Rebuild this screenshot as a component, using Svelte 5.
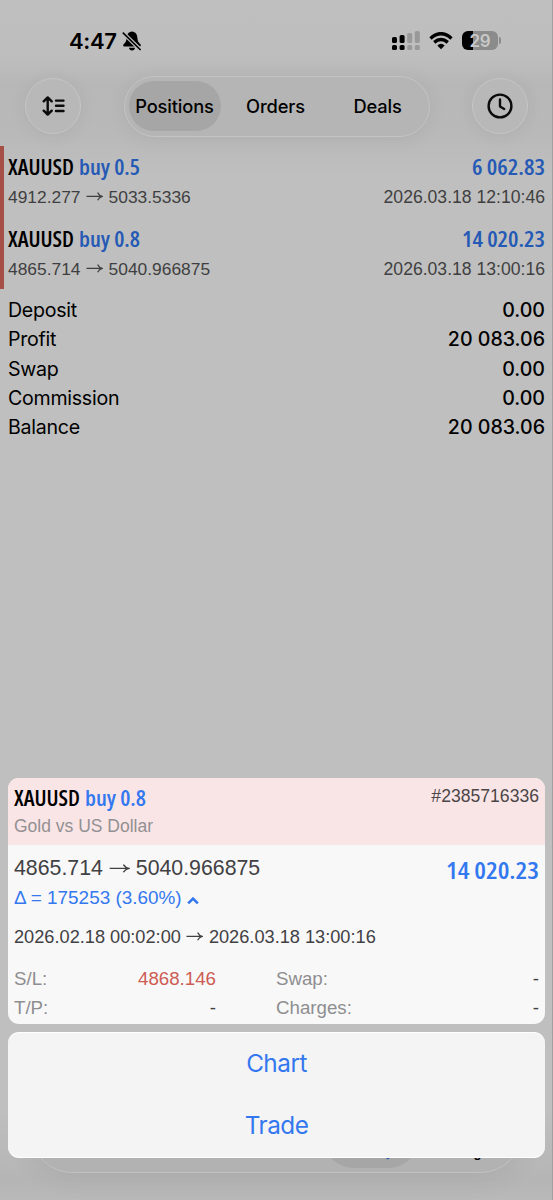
<script>
  const tabs = ["Positions", "Orders", "Deals"];

  const positions = [
    {
      side: "buy 0.5",
      open: "4912.277",
      close: "5033.5336",
      profit: "6 062.83",
      profitWidth: 73,
      time: "2026.03.18 12:10:46",
    },
    {
      side: "buy 0.8",
      open: "4865.714",
      close: "5040.966875",
      profit: "14 020.23",
      profitWidth: 83,
      time: "2026.03.18 13:00:16",
    },
  ];

  const summary = [
    { label: "Deposit", value: "0.00" },
    { label: "Profit", value: "20 083.06" },
    { label: "Swap", value: "0.00" },
    { label: "Commission", value: "0.00" },
    { label: "Balance", value: "20 083.06" },
  ];

  const nav = ["Quotes", "Chart", "Trade", "History", "Settings"];
</script>

<!-- condensed headline text, squeezed to a fixed width -->
{#snippet condensed(text, width, kind)}
  <svg class="condensed {kind}" {width} height="28">
    <text x="0" y="21" textLength={width} lengthAdjust="spacingAndGlyphs">{text}</text>
  </svg>
{/snippet}

{#snippet arrow(width)}
  <svg class="arrow" {width} height="12" viewBox="0 0 17 12" preserveAspectRatio="none">
    <path d="M0.5 5.4H16M11.6 1.6Q13.2 4.6 16.2 5.4Q13.2 6.2 11.6 9.2" />
  </svg>
{/snippet}

<div class="screen">
  <header class="status">
    <div class="status-left">
      <span class="time">4:47</span>
      <svg class="bell" width="20" height="20" viewBox="0 0 20 20">
        <path d="M10 0.6C6.4 0.9 4.7 3.6 4.6 7C4.5 10.3 3.4 11.4 1.6 13.2C0.7 14.3 1.3 15.6 2.6 15.6H17.4C18.7 15.6 19.3 14.3 18.4 13.2C16.6 11.4 15.5 10.3 15.4 7C15.3 3.6 13.6 0.9 10 0.6Z" />
        <path d="M7 16.8H13Q12.6 19.5 10 19.5Q7.4 19.5 7 16.8Z" />
        <path class="gap" d="M0.8 1.6L18.6 19" />
        <path class="slash" d="M0.8 1.6L18.6 19" />
      </svg>
    </div>
    <div class="status-right">
      <svg width="28" height="20" viewBox="0 0 28 20">
        <rect x="0" y="6" width="5" height="6" rx="1.6" />
        <rect x="7.6" y="4" width="5" height="8" rx="1.6" />
        <rect class="dim" x="15.2" y="2" width="5" height="10" rx="1.6" />
        <rect class="dim" x="22.8" y="0" width="5" height="12" rx="1.6" />
        <rect x="0" y="14" width="5" height="5" rx="1.6" />
        <rect x="7.6" y="14" width="5" height="5" rx="1.6" />
        <rect class="dim" x="15.2" y="14" width="5" height="5" rx="1.6" />
        <rect class="dim" x="22.8" y="14" width="5" height="5" rx="1.6" />
      </svg>
      <svg class="wifi" width="24" height="18" viewBox="0 0 24 18">
        <path class="wave" d="M1.5 6.4Q12 -3 22.5 6.4" />
        <path class="wave" d="M5.2 10.4Q12 4.5 18.8 10.4" />
        <path d="M8.3 13.4Q12 10.2 15.7 13.4L12 17.3Z" />
      </svg>
      <div class="battery"><span>29</span></div>
    </div>
  </header>

  <div class="toolbar">
    <button class="round" aria-label="Sort">
      <svg width="24" height="20" viewBox="0 0 24 20">
        <path d="M6.7 1.6V18.4M2.7 5.3L6.7 1.4L10.7 5.3M2.7 14.7L6.7 18.6L10.7 14.7" />
        <path d="M15 4.6H22.5M15 9.8H22.5M15 15H22.5" />
      </svg>
    </button>
    <div class="segments">
      {#each tabs as tab, i}
        <button class="segment" class:active={i === 0}>{tab}</button>
      {/each}
    </div>
    <button class="round" aria-label="Period">
      <svg width="26" height="26" viewBox="0 0 26 26">
        <circle cx="13" cy="13" r="11.4" />
        <path d="M13 6.5V13.5L17.2 16" />
      </svg>
    </button>
  </div>

  <main>
    <section class="positions">
      {#each positions as p}
        <article>
          <div class="line title">
            <div class="symbol">
              {@render condensed("XAUUSD", 66, "black")}
              {@render condensed(p.side, 61, "blue")}
            </div>
            {@render condensed(p.profit, p.profitWidth, "blue")}
          </div>
          <div class="line detail">
            <span>{p.open}{@render arrow(17)}{p.close}</span>
            <span class="closed">{p.time}</span>
          </div>
        </article>
      {/each}
    </section>

    <section class="summary">
      {#each summary as row}
        <div class="line">
          <span>{row.label}</span>
          <span class="value">{row.value}</span>
        </div>
      {/each}
    </section>
  </main>

  <nav>
    {#each nav as item}
      <span class:current={item === "History"}>{item}</span>
    {/each}
  </nav>

  <div class="sheet">
    <div class="card">
      <div class="card-header">
        <div>
          <div class="symbol">
            {@render condensed("XAUUSD", 66, "black")}
            {@render condensed("buy 0.8", 61, "bright")}
          </div>
          <div class="description">Gold vs US Dollar</div>
        </div>
        <span class="ticket">#2385716336</span>
      </div>
      <div class="card-body">
        <div class="line prices">
          <span>4865.714{@render arrow(21)}5040.966875</span>
          {@render condensed("14 020.23", 93, "bright large")}
        </div>
        <div class="delta">
          <span>Δ = 175253 (3.60%)</span>
          <svg width="12" height="9" viewBox="0 0 12 9">
            <path d="M1.2 7.3L6 2.5L10.8 7.3" />
          </svg>
        </div>
        <div class="period">2026.02.18 00:02:00{@render arrow(17)}2026.03.18 13:00:16</div>
        <div class="fields">
          <div class="line"><span>S/L:</span><span class="stop">4868.146</span></div>
          <div class="line"><span>Swap:</span><span class="dash">-</span></div>
          <div class="line"><span>T/P:</span><span class="dash">-</span></div>
          <div class="line"><span>Charges:</span><span class="dash">-</span></div>
        </div>
      </div>
    </div>

    <div class="card actions">
      <button>Chart</button>
      <button>Trade</button>
    </div>
  </div>
</div>

<style>
  :global(body) {
    background: #bfbfbf;
  }

  .screen {
    position: relative;
    box-sizing: border-box;
    width: 553px;
    height: 1200px;
    overflow: hidden;
    display: flex;
    flex-direction: column;
    background:
      linear-gradient(#b8b8b800 1110px, #b5b5b5 1180px, #b9b9b9 1200px),
      linear-gradient(#bfbfbf 0, #bebebe 55px, #b7b7b7 85px, #b9b9b9 135px, #bfbfbf 175px);
    border-right: 1px solid #a0a0a0;
    color: #000;
    font-family: "Liberation Sans", Arial, sans-serif;
  }

  button {
    padding: 0;
    border: 0;
    background: none;
    font: inherit;
    color: inherit;
    letter-spacing: inherit;
  }

  .status {
    display: flex;
    justify-content: space-between;
    height: 76px;
    padding: 0 54px 0 69px;
    box-sizing: border-box;
    font-family: Inter, sans-serif;
  }

  .status-left {
    display: flex;
    align-items: flex-start;
    padding-top: 27px;
  }

  .time {
    width: 53px;
    font-size: 22px;
    line-height: 28px;
    font-weight: 600;
    letter-spacing: -0.35px;
  }

  .bell {
    margin-top: 4px;
  }

  .gap {
    stroke: #bfbfbf;
    stroke-width: 4;
  }

  .slash {
    stroke: #000;
    stroke-width: 1.6;
  }

  .status-right {
    display: flex;
    align-items: flex-start;
    padding-top: 31px;
  }

  .dim {
    fill: #999;
  }

  .wifi {
    margin: 1px 9px 0;
  }

  .wave {
    fill: none;
    stroke: #000;
    stroke-width: 3.4;
  }

  .battery {
    position: relative;
    width: 36px;
    height: 19px;
    border-radius: 6px;
    background: linear-gradient(90deg, #000 11px, #8b8b8b 11px);
    color: #c8c8c8;
    font-size: 17px;
    font-weight: 600;
    line-height: 20px;
    letter-spacing: -0.3px;
    text-align: center;
  }

  .battery::after {
    content: "";
    position: absolute;
    left: 37px;
    top: 6px;
    width: 2px;
    height: 7px;
    border-radius: 0 2px 2px 0;
    background: #8b8b8b;
  }

  .toolbar {
    display: flex;
    align-items: center;
    justify-content: space-between;
    height: 60px;
    padding: 0 24px 0 25px;
    margin-bottom: 10px;
  }

  .round {
    display: flex;
    align-items: center;
    justify-content: center;
    box-sizing: border-box;
    width: 56px;
    height: 56px;
    border: 1.5px solid #c6c6c6;
    border-radius: 50%;
    background: #b8b8b8;
    box-shadow: 0 2px 18px rgba(0, 0, 0, 0.06);
  }

  .round svg {
    fill: none;
    stroke: #0b0b0b;
    stroke-width: 2.4;
    stroke-linecap: round;
    stroke-linejoin: round;
  }

  .segments {
    display: flex;
    align-items: center;
    box-sizing: border-box;
    width: 306px;
    height: 61px;
    padding: 0 4px;
    border: 1.5px solid #c4c4c4;
    border-radius: 31px;
    background: #b5b5b5;
    box-shadow: 0 2px 20px rgba(0, 0, 0, 0.06);
    font-family: Inter, sans-serif;
    font-size: 18.3px;
    font-weight: 450;
    letter-spacing: -0.15px;
  }

  .segment {
    flex-shrink: 0;
    width: 102px;
    height: 50px;
    border-radius: 25px;
  }

  .segment.active {
    width: 92px;
    margin-right: 4px;
    background: #a6a6a6;
  }

  .line {
    display: flex;
    justify-content: space-between;
  }

  .positions {
    border-left: 4px solid #a54f47;
  }

  .positions article {
    box-sizing: border-box;
    height: 71.5px;
    padding: 8px 7px 0 4px;
  }

  .symbol {
    display: flex;
    gap: 5px;
  }

  .condensed {
    display: block;
    overflow: visible;
    font-family: "Open Sans", sans-serif;
    font-size: 21.5px;
    font-weight: 650;
    font-stretch: 75%;
  }

  .black {
    fill: #000;
  }

  .blue {
    fill: #2459b5;
  }

  .bright {
    fill: #3478f0;
  }

  .large {
    font-size: 23.5px;
  }

  .arrow {
    margin: 0 6px 0 5px;
    fill: none;
    stroke: currentColor;
    stroke-width: 1.2;
  }

  .detail {
    color: #3f3f41;
    font-size: 17.4px;
    line-height: 30px;
  }

  .closed {
    font-size: 17.6px;
  }

  .summary {
    padding: 7px 7px 0 8px;
    font-family: Inter, sans-serif;
    font-size: 19.6px;
    line-height: 29.25px;
    letter-spacing: -0.27px;
  }

  .value {
    font-weight: 500;
    letter-spacing: 0;
  }

  nav {
    position: absolute;
    left: 31px;
    top: 1090px;
    display: flex;
    align-items: flex-end;
    box-sizing: border-box;
    width: 491px;
    height: 83px;
    padding: 0 10px 4px 8px;
    border: 1.5px solid #c2c2c2;
    border-radius: 41px;
    background: #b2b2b2;
    box-shadow: 0 2px 30px rgba(0, 0, 0, 0.08);
    font-family: Inter, sans-serif;
    font-size: 12.5px;
    font-weight: 600;
  }

  nav span {
    flex: 1;
    height: 20px;
    line-height: 10px;
    text-align: center;
  }

  nav .current {
    height: 62px;
    margin: 0 -3px;
    border-radius: 31px;
    background: #a6a6a6;
    color: #2459b5;
    line-height: 94px;
  }

  .sheet {
    position: absolute;
    left: 8px;
    top: 778px;
    width: 537px;
    display: flex;
    flex-direction: column;
    gap: 8px;
  }

  .card {
    box-sizing: border-box;
    height: 246px;
    border-radius: 11px;
    background: #f8f8f8;
    overflow: hidden;
  }

  .card-header {
    display: flex;
    justify-content: space-between;
    box-sizing: border-box;
    height: 67px;
    padding: 7px 6px 0;
    background: #fae5e6;
  }

  .description {
    color: #929092;
    font-size: 17.5px;
    line-height: 26px;
  }

  .ticket {
    color: #4b4648;
    font-size: 17.6px;
    line-height: 22px;
  }

  .card-body {
    padding: 7px 6px 0;
    color: #414144;
  }

  .prices {
    height: 32px;
    font-size: 21.3px;
    line-height: 32px;
  }

  .prices .arrow {
    margin: 0 6px;
  }

  .prices .condensed {
    margin: 6px 0 0;
  }

  .delta {
    display: flex;
    align-items: center;
    gap: 5px;
    height: 28px;
    color: #3478f0;
    font-size: 18.9px;
  }

  .delta svg {
    margin-top: 5px;
    fill: none;
    stroke: currentColor;
    stroke-width: 2.6;
  }

  .period {
    padding-top: 10px;
    font-size: 18.2px;
    line-height: 31px;
  }

  .fields {
    display: grid;
    grid-template-columns: 202px 263px;
    column-gap: 60px;
    padding-top: 11px;
    color: #8e8e90;
    font-size: 18.7px;
    line-height: 29px;
  }

  .stop {
    color: #cd5c54;
  }

  .dash {
    color: #414144;
  }

  .actions {
    display: flex;
    flex-direction: column;
    height: 126px;
    background: #f4f4f4;
    border-bottom: 1px solid #fff;
    border-top: 1px solid #fff;
    color: #3478f0;
    font-family: Inter, sans-serif;
    font-size: 24.3px;
    letter-spacing: -0.5px;
  }

  .actions button {
    height: 63px;
    padding-bottom: 2px;
  }
</style>
